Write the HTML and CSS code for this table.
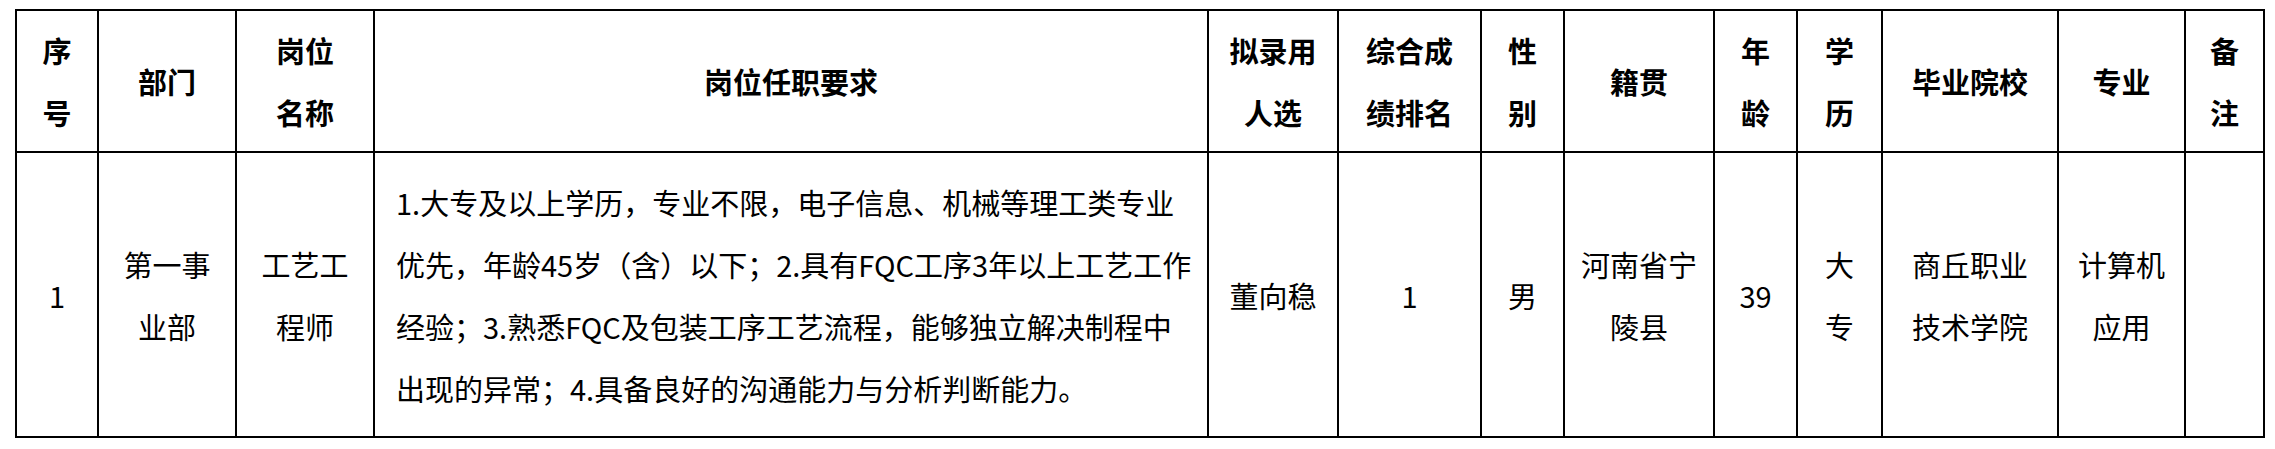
FILE: index.html
```html
<!DOCTYPE html>
<html lang="zh-CN">
<head>
<meta charset="utf-8">
<title>拟录用人员名单</title>
<link rel="stylesheet" href="styles.css">
</head>
<body>
<table class="roster">
  <colgroup>
    <col class="c-no"><col class="c-dept"><col class="c-post"><col class="c-req">
    <col class="c-name"><col class="c-rank"><col class="c-sex"><col class="c-origin">
    <col class="c-age"><col class="c-edu"><col class="c-school"><col class="c-major"><col class="c-note">
  </colgroup>
  <thead>
    <tr>
      <th>序<br>号</th>
      <th>部门</th>
      <th>岗位<br>名称</th>
      <th>岗位任职要求</th>
      <th>拟录用<br>人选</th>
      <th>综合成<br>绩排名</th>
      <th>性<br>别</th>
      <th>籍贯</th>
      <th>年<br>龄</th>
      <th>学<br>历</th>
      <th>毕业院校</th>
      <th>专业</th>
      <th>备<br>注</th>
    </tr>
  </thead>
  <tbody>
    <tr>
      <td class="num">1</td>
      <td>第一事<br>业部</td>
      <td>工艺工<br>程师</td>
      <td class="req">1.大专及以上学历，专业不限，电子信息、机械等理工类专业<br>优先，年龄45岁（含）以下；2.具有FQC工序3年以上工艺工作<br>经验；3.熟悉FQC及包装工序工艺流程，能够独立解决制程中<br>出现的异常；4.具备良好的沟通能力与分析判断能力。</td>
      <td>董向稳</td>
      <td class="num">1</td>
      <td>男</td>
      <td>河南省宁<br>陵县</td>
      <td class="num">39</td>
      <td>大<br>专</td>
      <td>商丘职业<br>技术学院</td>
      <td>计算机<br>应用</td>
      <td></td>
    </tr>
  </tbody>
</table>
</body>
</html>
```
FILE: styles.css
```css
html, body {
  margin: 0;
  padding: 0;
  background: #fff;
}
body {
  padding: 9px 0 0 15px;
  font-family: "Noto Sans CJK SC", sans-serif;
  color: #000;
}
.roster {
  border-collapse: collapse;
  table-layout: fixed;
  width: 2248px;
  border: 2px solid #000;
}
.roster th,
.roster td {
  border: 2px solid #000;
  padding: 0;
  text-align: center;
  vertical-align: middle;
  font-size: 29px;
  line-height: 62px;
  white-space: nowrap;
  overflow: hidden;
}
.roster th {
  font-weight: 700;
  height: 140px;
}
.roster td {
  font-weight: 400;
  height: 283px;
}
.roster td.req {
  text-align: left;
  padding-left: 21px;
}
.c-no { width: 82px; }
.c-dept { width: 138px; }
.c-post { width: 138px; }
.c-req { width: 834px; }
.c-name { width: 130px; }
.c-rank { width: 143px; }
.c-sex { width: 83px; }
.c-origin { width: 150px; }
.c-age { width: 83px; }
.c-edu { width: 85px; }
.c-school { width: 176px; }
.c-major { width: 127px; }
.c-note { width: 79px; }
```
